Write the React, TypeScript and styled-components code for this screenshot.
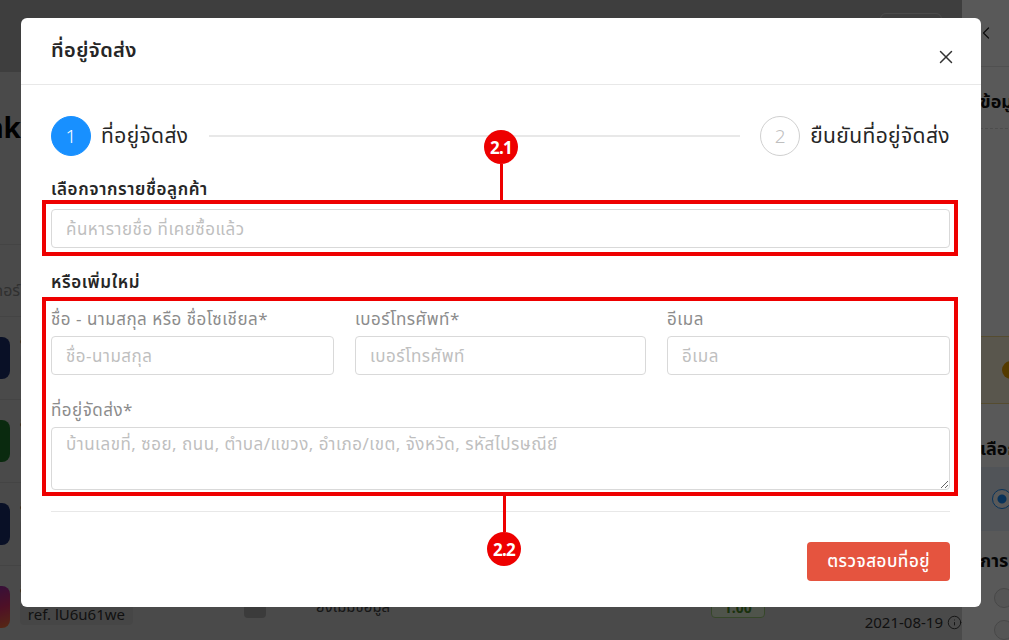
import styled, { createGlobalStyle } from "styled-components";
import { X, ChevronLeft, Info } from "lucide-react";

const GlobalStyle = createGlobalStyle`
  * { box-sizing: border-box; }
  html, body { margin: 0; padding: 0; }
  body {
    font-family: "Noto Sans", "Noto Sans Thai", "Liberation Sans", sans-serif;
    width: 1009px;
    height: 640px;
    overflow: hidden;
    color: #262626;
  }
`;

const rows = [
  { color: "#1c2f6e", ref: "ref. A8kd21pq" },
  { color: "#1f7a2c", ref: "ref. Pq91xa0e" },
  { color: "#1c2f6e", ref: "ref. Zk20msd1" },
  { color: "linear-gradient(160deg, #7b2cbf, #e1306c 60%, #f77737)", ref: "ref. lU6u61we" },
];

export default function App() {
  return (
    <>
      <GlobalStyle />
      <Page>
        <Main>
          <TopBar>
            <TopButton />
          </TopBar>
          <MainTitle>Bank</MainTitle>
          <SearchRow>
            <SearchText>ค้นหาชื่อ หรือ เลขที่ออเดอร์</SearchText>
          </SearchRow>
          {rows.map(r => (
            <ListRow key={r.ref}>
              <AppIcon $bg={r.color} />
              <RowBody>
                <RowName>ลูกค้าออนไลน์</RowName>
                <RefChip>{r.ref}</RefChip>
              </RowBody>
              <GrayIcon />
              <RowStatus>ยังไม่มีข้อมูล</RowStatus>
              <AmountTag>1.00</AmountTag>
              <RowDate>
                2021-08-19 <Info size={15} strokeWidth={1.5} />
              </RowDate>
            </ListRow>
          ))}
        </Main>
        <Drawer>
          <DrawerHead>
            <ChevronLeft size={20} strokeWidth={1.5} />
            <span>(</span>
          </DrawerHead>
          <DrawerTitle $pt={22} $pb={14}>ข้อมูล</DrawerTitle>
          <DrawerSpacer />
          <NoticeCard>
            <NoticeDot />
          </NoticeCard>
          <DrawerTitle $pt={32} $pb={6}>เลือก</DrawerTitle>
          <ChoiceTile>
            <Radio $checked />
          </ChoiceTile>
          <DrawerTitle $pt={17} $pb={9}>การ</DrawerTitle>
          <RadioRow>
            <Radio />
          </RadioRow>
          <RadioRow>
            <Radio />
          </RadioRow>
        </Drawer>
      </Page>

      <Mask>
        <Modal>
          <ModalHeader>
            <ModalTitle>ที่อยู่จัดส่ง</ModalTitle>
            <CloseButton aria-label="close">
              <X size={22} strokeWidth={1.6} />
            </CloseButton>
          </ModalHeader>

          <ModalBody>
            <Steps>
              <Step>
                <StepCircle $active>1</StepCircle>
                <StepLabel>ที่อยู่จัดส่ง</StepLabel>
              </Step>
              <StepLine />
              <Step>
                <StepCircle>2</StepCircle>
                <StepLabel>ยืนยันที่อยู่จัดส่ง</StepLabel>
              </Step>
            </Steps>

            <SectionLabel>เลือกจากรายชื่อลูกค้า</SectionLabel>
            <Highlight $pad="5px 4px 4px 5px" $mt={-1}>
              <Marker $up $shift={1}>
                <Badge>2.1</Badge>
                <Stem $len={40} />
              </Marker>
              <Input placeholder="ค้นหารายชื่อ ที่เคยซื้อแล้ว" />
            </Highlight>

            <SectionLabel $mt={14}>หรือเพิ่มใหม่</SectionLabel>
            <Highlight $pad="6px 4px 2px 5px" $mt={3}>
              <FieldGrid>
                <Field>
                  <FieldLabel>ชื่อ - นามสกุล หรือ ชื่อโซเชียล*</FieldLabel>
                  <Input placeholder="ชื่อ-นามสกุล" />
                </Field>
                <Field>
                  <FieldLabel>เบอร์โทรศัพท์*</FieldLabel>
                  <Input placeholder="เบอร์โทรศัพท์" />
                </Field>
                <Field>
                  <FieldLabel>อีเมล</FieldLabel>
                  <Input placeholder="อีเมล" />
                </Field>
              </FieldGrid>
              <Field $mt={23}>
                <FieldLabel>ที่อยู่จัดส่ง*</FieldLabel>
                <TextArea placeholder="บ้านเลขที่, ซอย, ถนน, ตำบล/แขวง, อำเภอ/เขต, จังหวัด, รหัสไปรษณีย์" />
              </Field>
              <Marker $shift={4}>
                <Stem $len={40} />
                <Badge>2.2</Badge>
              </Marker>
            </Highlight>

            <Footer>
              <PrimaryButton>ตรวจสอบที่อยู่</PrimaryButton>
            </Footer>
          </ModalBody>
        </Modal>
      </Mask>
    </>
  );
}

/* ---------- page behind the modal ---------- */

const Page = styled.div`
  display: grid;
  grid-template-columns: 962px 1fr;
  height: 640px;
  overflow: hidden;
`;

const Main = styled.div`
  background: #d4d4d4;
  overflow: hidden;
`;

const TopBar = styled.div`
  height: 72px;
  background: #b1b1b1;
  display: flex;
  justify-content: flex-end;
  padding: 13px 20px 0 0;
`;

const TopButton = styled.div`
  width: 62px;
  height: 30px;
  border: 1px solid #d8d8d8;
  border-radius: 6px;
`;

const MainTitle = styled.h1`
  margin: 36px 0 0 -50px;
  font: 700 28px "Noto Sans", sans-serif;
  color: #000;
  height: 110px;
`;

const SearchRow = styled.div`
  border-top: 1px solid #c4c4c4;
  border-bottom: 1px solid #c4c4c4;
  height: 73px;
  margin-top: 26px;
  padding-top: 20px;
  display: flex;
  align-items: center;
  margin-left: -150px;
`;

const SearchText = styled.span`
  font-size: 16px;
  color: #8a8a8a;
`;

const ListRow = styled.div`
  height: 83px;
  border-bottom: 1px solid #c4c4c4;
  display: flex;
  align-items: center;
  margin-left: -32px;
  gap: 10px;
`;

const AppIcon = styled.div<{ $bg: string }>`
  width: 42px;
  height: 42px;
  border-radius: 8px;
  background: ${p => p.$bg};
`;

const RowBody = styled.div`
  width: 215px;
  display: flex;
  flex-direction: column;
  gap: 4px;
  margin-top: -12px;
`;

const RowName = styled.span`
  font-size: 14px;
  color: #555;
`;

const RefChip = styled.span`
  align-self: flex-start;
  background: #c8c8c8;
  border-radius: 4px;
  padding: 1px 8px;
  font-size: 15px;
  color: #333;
`;

const GrayIcon = styled.div`
  width: 22px;
  height: 22px;
  border-radius: 4px;
  background: #a8a8a8;
`;

const RowStatus = styled.span`
  width: 427px;
  padding-left: 40px;
  font-size: 15px;
  color: #444;
`;

const AmountTag = styled.span`
  border: 1px solid #9ccc7a;
  background: #e2efd8;
  color: #4a8c2a;
  border-radius: 4px;
  padding: 0 12px;
  font-size: 14px;
  font-weight: 700;
`;

const RowDate = styled.span`
  margin: 30px 0 0 90px;
  display: flex;
  align-items: center;
  gap: 4px;
  font-size: 15px;
  color: #333;
  white-space: nowrap;
`;

const Drawer = styled.div`
  background: #fff;
  overflow: hidden;
  padding-left: 18px;
  width: 400px;
`;

const DrawerHead = styled.div`
  height: 67px;
  border-bottom: 1px solid #e6e6e6;
  margin-left: -18px;
  padding-left: 14px;
  display: flex;
  align-items: center;
  gap: 14px;
  color: #222;
  font-size: 18px;
`;

const DrawerTitle = styled.div<{ $pt: number; $pb: number }>`
  font-size: 18px;
  line-height: 25px;
  font-weight: 700;
  color: #111;
  padding: ${p => p.$pt}px 0 ${p => p.$pb}px;
  white-space: nowrap;
`;

const DrawerSpacer = styled.div`
  border-top: 1px dashed #ddd;
  height: 208px;
`;

const NoticeCard = styled.div`
  height: 68px;
  margin-left: -18px;
  background: #fff6dc;
  border-top: 1px solid #f3d98b;
  border-bottom: 1px solid #f3d98b;
  display: flex;
  align-items: center;
  padding-left: 40px;
`;

const NoticeDot = styled.div`
  width: 18px;
  height: 18px;
  border-radius: 50%;
  background: #f0a500;
`;

const ChoiceTile = styled.div`
  height: 64px;
  margin-left: -18px;
  padding-left: 30px;
  background: #e9f1fb;
  display: flex;
  align-items: center;
`;

const RadioRow = styled.div`
  height: 32px;
  display: flex;
  align-items: center;
  padding-left: 14px;
`;

const Radio = styled.span<{ $checked?: boolean }>`
  width: 20px;
  height: 20px;
  border-radius: 50%;
  border: 1px solid ${p => (p.$checked ? "#1890ff" : "#ccc")};
  background: ${p => (p.$checked ? "radial-gradient(circle, #1890ff 4px, #fff 5px)" : "#f4f4f4")};
`;

/* ---------- modal ---------- */

const Mask = styled.div`
  position: fixed;
  inset: 0;
  background: rgba(0, 0, 0, 0.65);
  display: flex;
  align-items: flex-start;
  padding: 18px 0 0 21px;
`;

const Modal = styled.div`
  width: 960px;
  background: #fff;
  border-radius: 6px;
`;

const ModalHeader = styled.div`
  height: 67px;
  padding: 0 24px 0 30px;
  border-bottom: 1px solid #e8e8e8;
  display: flex;
  align-items: center;
  justify-content: space-between;
`;

const ModalTitle = styled.h2`
  margin: 0 0 1px;
  font-size: 20px;
  font-weight: 600;
  letter-spacing: 0.4px;
  color: #262626;
`;

const CloseButton = styled.button`
  border: none;
  background: none;
  padding: 0;
  margin-top: 11px;
  color: #333;
  display: flex;
  cursor: pointer;
`;

const ModalBody = styled.div`
  padding: 31px 31px 26px 30px;
`;

const Steps = styled.div`
  display: flex;
  align-items: center;
  height: 40px;
  margin-bottom: 21px;
`;

const Step = styled.div`
  display: flex;
  align-items: center;
  gap: 10px;
`;

const StepCircle = styled.span<{ $active?: boolean }>`
  width: 40px;
  height: 40px;
  border-radius: 50%;
  display: flex;
  align-items: center;
  justify-content: center;
  font-size: 19px;
  font-weight: 300;
  background: ${p => (p.$active ? "#1890ff" : "#fff")};
  color: ${p => (p.$active ? "#fff" : "#bfbfbf")};
  border: 1px solid ${p => (p.$active ? "#1890ff" : "#d0d0d0")};
`;

const StepLabel = styled.span`
  font-size: 21px;
  letter-spacing: 0.4px;
  color: #262626;
  white-space: nowrap;
`;

const StepLine = styled.div`
  flex: 1;
  height: 2px;
  background: #e8e8e8;
  margin: 0 20px;
`;

const SectionLabel = styled.div<{ $mt?: number }>`
  font-size: 17px;
  font-weight: 600;
  letter-spacing: 0.6px;
  line-height: 24px;
  color: #262626;
  margin-top: ${p => p.$mt ?? 0}px;
`;

const Highlight = styled.div<{ $pad: string; $mt: number }>`
  position: relative;
  border: 4px solid #ee0000;
  padding: ${p => p.$pad};
  margin: ${p => p.$mt}px -8px 0 -9px;
`;

const Marker = styled.div<{ $up?: boolean; $shift: number }>`
  position: absolute;
  left: calc(50% + ${p => p.$shift}px);
  ${p => (p.$up ? "bottom: 100%;" : "top: 100%;")}
  transform: translateX(-50%);
  display: flex;
  flex-direction: column;
  align-items: center;
`;

const Badge = styled.span`
  width: 34px;
  height: 34px;
  border-radius: 50%;
  background: #ee0000;
  color: #fff;
  font: 700 17px "Noto Sans", sans-serif;
  letter-spacing: -0.8px;
  display: flex;
  align-items: center;
  justify-content: center;
`;

const Stem = styled.span<{ $len: number }>`
  width: 3px;
  height: ${p => p.$len}px;
  background: #ee0000;
`;

const Input = styled.input`
  display: block;
  width: 100%;
  height: 39px;
  border: 1px solid #d9d9d9;
  border-radius: 4px;
  padding: 0 14px;
  font: 17px "Noto Sans", "Noto Sans Thai", sans-serif;
  letter-spacing: 0.5px;
  color: #262626;
  outline: none;

  &::placeholder {
    color: #bfbfbf;
  }
`;

const TextArea = styled.textarea`
  display: block;
  width: 100%;
  height: 63px;
  border: 1px solid #d9d9d9;
  border-radius: 4px;
  padding: 4px 14px;
  font: 17px "Noto Sans", "Noto Sans Thai", sans-serif;
  letter-spacing: 0.5px;
  outline: none;

  &::placeholder {
    color: #bfbfbf;
  }
`;

const FieldGrid = styled.div`
  display: grid;
  grid-template-columns: 283px 291px 283px;
  gap: 21px;
`;

const Field = styled.div<{ $mt?: number }>`
  display: flex;
  flex-direction: column;
  gap: 5px;
  margin-top: ${p => p.$mt ?? 0}px;
`;

const FieldLabel = styled.label`
  font-size: 17px;
  letter-spacing: 0.5px;
  line-height: 24px;
  color: #8c8c8c;
  white-space: nowrap;
`;

const Footer = styled.div`
  margin-top: 15px;
  border-top: 1px solid #e8e8e8;
  padding-top: 30px;
  display: flex;
  justify-content: flex-end;
`;

const PrimaryButton = styled.button`
  height: 39px;
  padding: 0 20px;
  border: none;
  border-radius: 4px;
  background: #e5543f;
  color: #fff;
  font: 500 17px "Noto Sans", "Noto Sans Thai", sans-serif;
  letter-spacing: 0.5px;
  cursor: pointer;
`;
